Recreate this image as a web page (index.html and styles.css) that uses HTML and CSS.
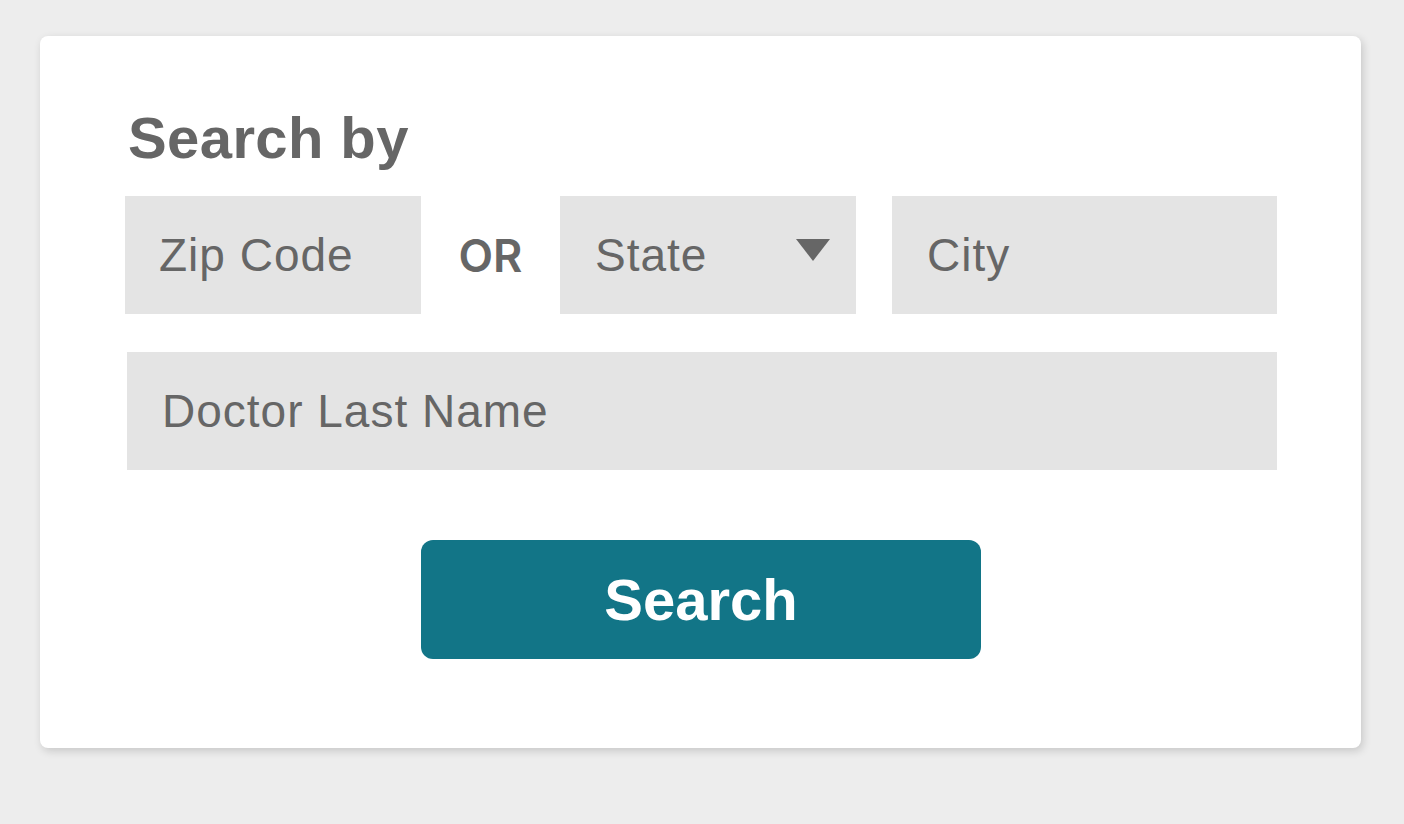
FILE: index.html
```html
<!DOCTYPE html>
<html lang="en">
<head>
<meta charset="utf-8">
<title>Find a Doctor</title>
<link rel="stylesheet" href="styles.css">
</head>
<body>
<main class="card">
  <h1 class="title">Search by</h1>
  <div class="row">
    <div class="field field-zip">Zip Code</div>
    <div class="or">OR</div>
    <div class="field field-state">
      <span>State</span>
      <svg class="caret" width="34" height="22" viewBox="0 0 34 22" aria-hidden="true"><polygon points="0,0 34,0 17,22" fill="#666"/></svg>
    </div>
    <div class="field field-city">City</div>
  </div>
  <div class="field field-doctor">Doctor Last Name</div>
  <div class="actions">
    <button class="btn" type="button">Search</button>
  </div>
</main>
</body>
</html>
```
FILE: styles.css
```css
html, body {
  margin: 0;
  padding: 0;
}
body {
  background: #ededed;
  font-family: "Liberation Sans", Arial, sans-serif;
  color: #666;
  padding: 36px 0 0 40px;
  height: 824px;
  box-sizing: border-box;
}
.card {
  width: 1321px;
  box-sizing: border-box;
  background: #fff;
  border-radius: 8px;
  box-shadow: 2px 3px 8px rgba(0, 0, 0, 0.16);
  padding: 70px 84px 89px 85px;
  display: flex;
  flex-direction: column;
}
.title {
  margin: 0 0 26px 3px;
  font-size: 58px;
  line-height: 64px;
  font-weight: 700;
  letter-spacing: 0.4px;
  color: #666;
}
.row {
  display: flex;
  align-items: center;
}
.field {
  background: #e4e4e4;
  height: 118px;
  box-sizing: border-box;
  padding-left: 35px;
  display: flex;
  align-items: center;
  font-size: 46px;
  line-height: 1;
  letter-spacing: 1px;
  color: #666;
}
.field-zip {
  width: 296px;
  padding-left: 34px;
}
.or {
  width: 139px;
  text-align: center;
  font-family: Inter, "Liberation Sans", sans-serif;
  font-size: 45px;
  font-weight: 600;
  color: #666;
}
.field-state {
  width: 296px;
  padding-right: 26px;
  justify-content: space-between;
}
.caret {
  display: block;
  margin-top: -10px;
}
.field-city {
  width: 385px;
  margin-left: 36px;
}
.field-doctor {
  margin-top: 38px;
  margin-left: 2px;
}
.actions {
  display: flex;
  justify-content: center;
  margin-top: 70px;
}
.btn {
  width: 560px;
  height: 119px;
  border: none;
  border-radius: 12px;
  background: #127587;
  color: #fff;
  font-family: "Liberation Sans", Arial, sans-serif;
  font-size: 58px;
  font-weight: 700;
  padding: 0;
  cursor: pointer;
}
```
